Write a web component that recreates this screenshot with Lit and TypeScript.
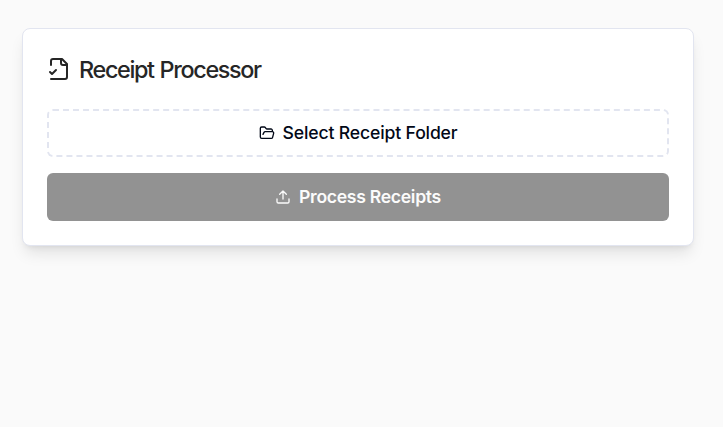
import { LitElement, html, css } from "lit";
import { customElement } from "lit/decorators.js";

@customElement("app-root")
export class AppRoot extends LitElement {
  static styles = css`
    :host {
      display: block;
      box-sizing: border-box;
      height: 427px;
      padding: 28px 29px 0 22px;
      background: #fafafa;
      font-family: Inter, sans-serif;
      -webkit-font-smoothing: antialiased;
    }
    .card {
      box-sizing: border-box;
      height: 218px;
      padding: 24px;
      background: #fff;
      border: 1px solid #e2e5f0;
      border-radius: 8px;
      box-shadow: 0 10px 15px -3px rgba(0, 0, 0, 0.1), 0 4px 6px -4px rgba(0, 0, 0, 0.1);
    }
    .title {
      display: flex;
      align-items: center;
      gap: 8px;
      height: 32px;
      margin: 0;
      color: #262626;
      font-size: 23.4px;
      font-weight: 500;
      line-height: 32px;
      letter-spacing: -1.35px;
      word-spacing: 1px;
    }
    .title span {
      padding-top: 2px;
    }
    .actions {
      display: flex;
      flex-direction: column;
      gap: 16px;
      margin-top: 24px;
    }
    button {
      display: flex;
      align-items: center;
      justify-content: center;
      gap: 8px;
      box-sizing: border-box;
      height: 48px;
      padding: 0;
      border-radius: 6px;
      font: 500 17.6px/28px Inter, sans-serif;
      letter-spacing: -0.15px;
    }
    .select {
      background: #fff;
      border: 2px dashed #e2e5f0;
      color: #020817;
    }
    .process {
      background: #929292;
      border: 0;
      color: #fbfbfb;
      font-weight: 600;
      letter-spacing: -0.3px;
    }
    svg {
      flex: none;
      fill: none;
      stroke: currentColor;
      stroke-width: 2;
      stroke-linecap: round;
      stroke-linejoin: round;
    }
  `;

  render() {
    return html`
      <section class="card">
        <h1 class="title">
          <svg width="24" height="24" viewBox="0 0 24 24">
            <path d="M4 22h14a2 2 0 0 0 2-2V7l-5-5H6a2 2 0 0 0-2 2v4" />
            <path d="M14 2v4a2 2 0 0 0 2 2h4" />
            <path d="m3 15 2 2 4-4" />
          </svg>
          <span>Receipt Processor</span>
        </h1>
        <div class="actions">
          <button class="select">
            <svg width="16" height="16" viewBox="0 0 24 24">
              <path d="m6 14 1.5-2.9A2 2 0 0 1 9.24 10H20a2 2 0 0 1 1.94 2.5l-1.54 6a2 2 0 0 1-1.95 1.5H4a2 2 0 0 1-2-2V5a2 2 0 0 1 2-2h3.9a2 2 0 0 1 1.69.9l.81 1.2a2 2 0 0 0 1.67.9H18a2 2 0 0 1 2 2v2" />
            </svg>
            <span>Select Receipt Folder</span>
          </button>
          <button class="process">
            <svg width="16" height="16" viewBox="0 0 24 24">
              <path d="M21 15v4a2 2 0 0 1-2 2H5a2 2 0 0 1-2-2v-4" />
              <path d="m17 8-5-5-5 5M12 3v12" />
            </svg>
            <span>Process Receipts</span>
          </button>
        </div>
      </section>
    `;
  }
}
